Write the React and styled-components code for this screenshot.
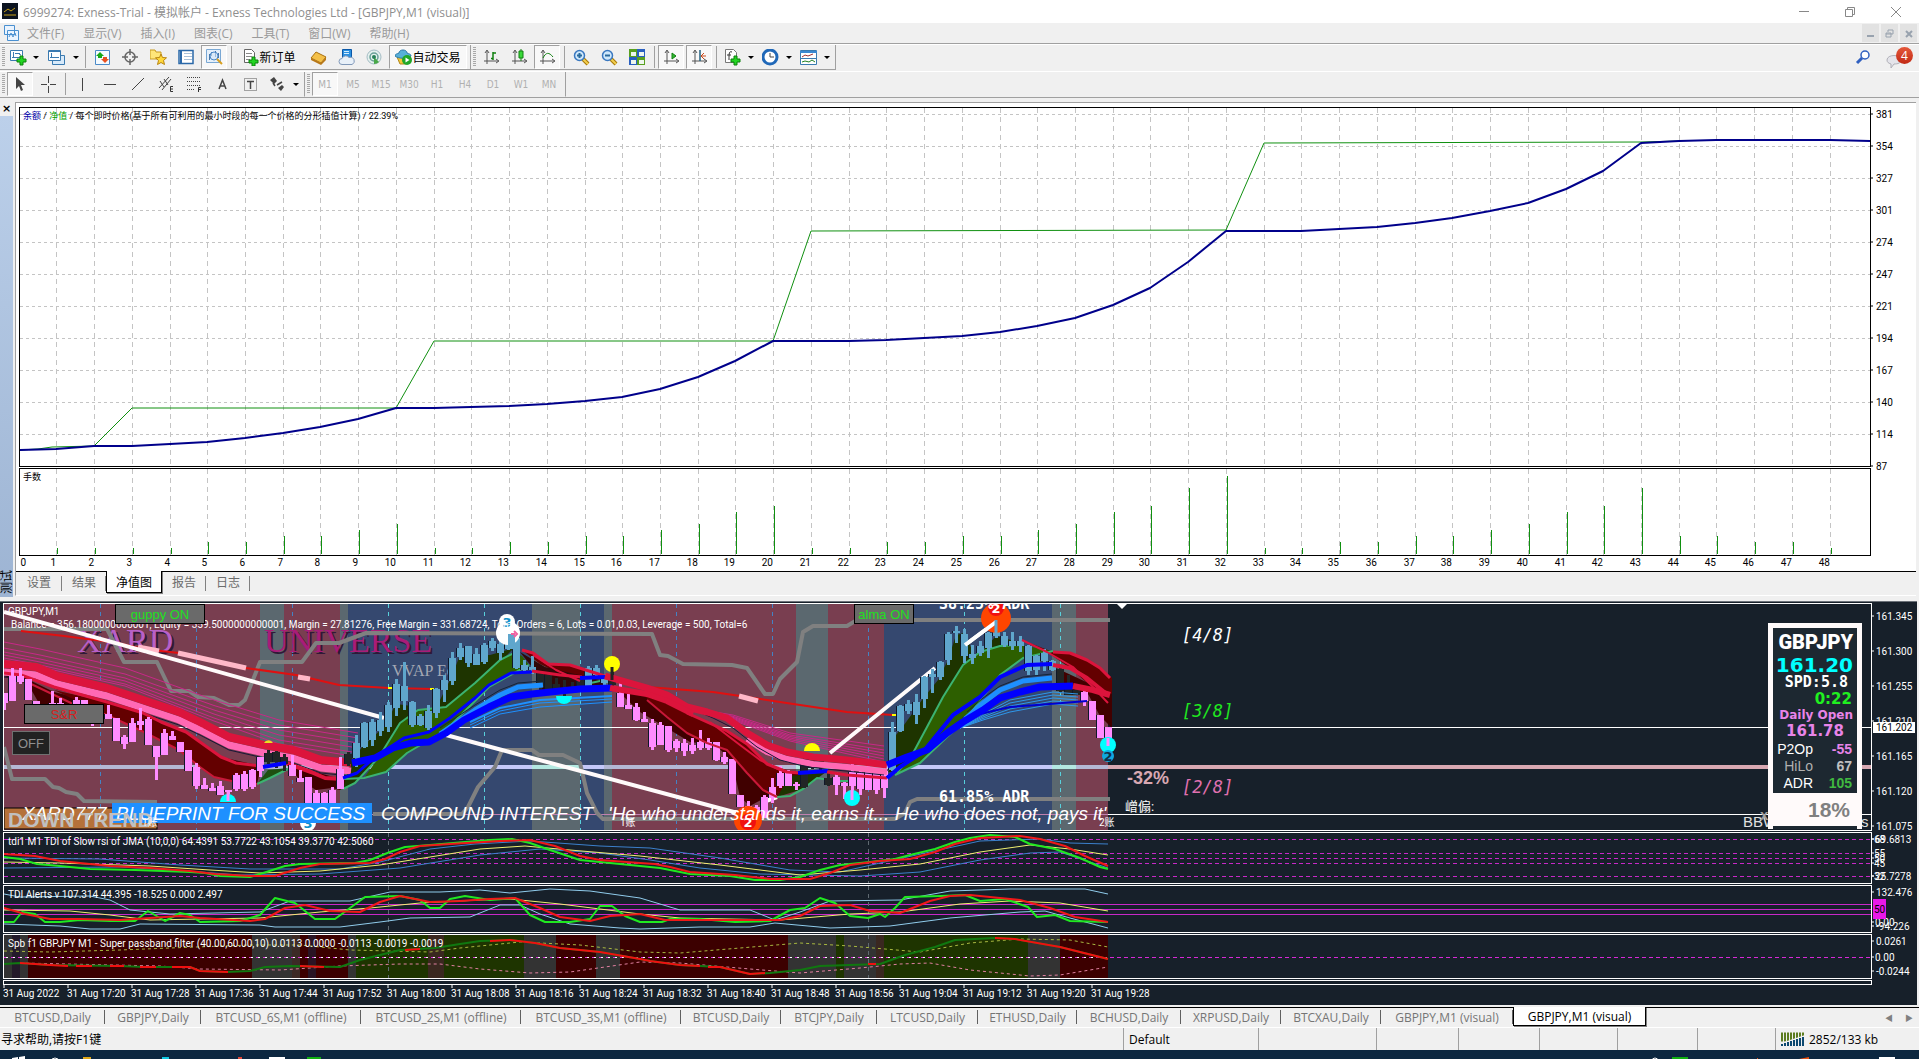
import React from "react";
import styled, { createGlobalStyle, css } from "styled-components";

const UI_FONT = '"Open Sans", "Noto Sans CJK SC", sans-serif';
const CHART_FONT = 'Roboto, "Noto Sans CJK SC", sans-serif';

const GlobalStyle = createGlobalStyle`
  * {
    box-sizing: border-box;
  }

  body {
    margin: 0;
    overflow: hidden;
    background: #f0f0f0;
    font-family: ${UI_FONT};
    font-size: 12px;
    color: #000;
  }

  button {
    margin: 0;
    padding: 0;
    border: 0;
    background: none;
    font: inherit;
    color: inherit;
  }

  svg {
    display: block;
  }
`;

const Window = styled.div`
  display: flex;
  flex-direction: column;
`;

/* ---------- title and menu ---------- */

const TitleBar = styled.header`
  display: flex;
  align-items: center;
  height: 23px;
  padding-left: 2px;
  background: #fff;
  color: #8f8f8f;

  h1 {
    flex: 1;
    margin: 0 0 0 4px;
    font-size: 12px;
    font-weight: 400;
  }
`;

const WindowButton = styled.button`
  display: flex;
  align-items: center;
  justify-content: center;
  width: 46px;
  height: 20px;
`;

const MenuBar = styled.nav`
  display: flex;
  align-items: center;
  height: 21px;
  padding: 0 2px 0 3px;
  border-bottom: 1px solid #a0a0a0;
  color: #9a9a9a;
`;

const MenuItems = styled.div`
  display: flex;
  flex: 1;
  gap: 19px;
  margin-left: 7px;
`;

const MdiButton = styled.button`
  display: flex;
  align-items: center;
  justify-content: center;
  width: 17px;
  height: 18px;
  margin-left: 2px;
  background: #e2e2e2;
`;

/* ---------- toolbars ---------- */

const ToolRow = styled.div`
  display: flex;
  align-items: stretch;
  height: 27px;
  border-top: 1px solid #fff;
  border-bottom: 1px solid ${(p) => (p.$last ? "#a0a0a0" : "transparent")};
`;

const ToolGroup = styled.div`
  display: flex;
  align-items: center;
  padding-right: 1px;
  border-right: 1px solid #a0a0a0;
  border-bottom: 1px solid ${(p) => (p.$underline ? "#a0a0a0" : "transparent")};
`;

const Grip = styled.span`
  width: 3px;
  height: 20px;
  margin: 0 2px;
  background: repeating-linear-gradient(#a8a8a8 0 1px, #f0f0f0 1px 2px);
`;

const ToolButton = styled.button`
  display: flex;
  align-items: center;
  justify-content: center;
  width: ${(p) => p.$width || 26}px;
  height: 24px;
  margin-right: 2px;
  border: 1px solid transparent;
  white-space: nowrap;

  ${(p) =>
    p.$pressed &&
    css`
      background: #f8f8f8;
      border-color: #a0a0a0 #fff #fff #a0a0a0;
    `}
`;

const PeriodButton = styled(ToolButton)`
  color: #b0b0b0;
  font-size: 10px;
  font-family: "DejaVu Sans Condensed", sans-serif;
`;

const Caret = styled.button`
  width: 10px;
  height: 24px;
  margin-right: 2px;

  &::after {
    content: "";
    display: block;
    width: 0;
    margin: 0 auto;
    border: 3px solid transparent;
    border-top-color: #000;
    border-bottom: 0;
  }
`;

const Separator = styled.span`
  width: 1px;
  height: 22px;
  margin: 0 3px 0 2px;
  background: #a0a0a0;
`;

const ToolSpacer = styled.span`
  flex: 1;
`;

const MailButton = styled.button`
  position: relative;
  width: 28px;
  height: 26px;
  margin: 0 5px 0 8px;

  svg {
    margin-top: 6px;
  }
`;

const Badge = styled.span`
  position: absolute;
  top: 2px;
  right: 1px;
  width: 17px;
  height: 17px;
  border-radius: 50%;
  background: linear-gradient(#e4573a, #c22a14);
  color: #fff;
  font-size: 12px;
  line-height: 17px;
  text-align: center;
`;

/* ---------- tester ---------- */

const Tester = styled.section`
  display: flex;
  height: 499px;
  margin-top: 4px;
`;

const TesterSide = styled.aside`
  display: flex;
  flex-direction: column;
  width: 15px;
  padding-right: 2px;

  button {
    height: 14px;
    font: bold 11px/10px "DejaVu Sans", sans-serif;
  }

  div {
    flex: 1;
    display: flex;
    align-items: center;
    justify-content: flex-end;
    padding-bottom: 3px;
    margin-bottom: 4px;
    background: linear-gradient(#bcd0ea, #9db4d3);
    writing-mode: vertical-rl;
    text-orientation: sideways;
    font-size: 12px;
    line-height: 13px;
  }

  span {
    transform: rotate(180deg);
  }
`;

const TesterMain = styled.div`
  flex: 1;
  min-width: 0;
  height: 494px;
  margin-right: 3px;
  border-top: 1px solid #a0a0a0;
  border-left: 1px solid #a0a0a0;
  border-bottom: 1px solid #fff;
`;

const TesterCharts = styled.div`
  padding: 4px 0 0 3px;
  background: #fff;
  border-bottom: 1px solid #000;
`;

const PlotRow = styled.div`
  display: flex;
  height: ${(p) => p.$height}px;
  margin-bottom: ${(p) => p.$gap || 0}px;
`;

const Plot = styled.div`
  position: relative;
  flex: 1;
  min-width: 0;
  overflow: hidden;
  border: 1px solid ${(p) => p.$line};
`;

const AxisColumn = styled.div`
  width: 45px;

  svg {
    overflow: visible;
  }
`;

const Caption = styled.p`
  position: absolute;
  top: 1px;
  left: 3px;
  margin: 0;
  font: 9px/14px ${CHART_FONT};

  b {
    font-weight: 400;
    color: #0000a8;
  }

  i {
    font-style: normal;
    color: #00a000;
  }
`;

const TesterTabs = styled.div`
  display: flex;
  height: 22px;
`;

const TesterTab = styled.button`
  position: relative;
  width: ${(p) => p.$width}px;
  height: 20px;
  color: #6c6c6c;

  &::after {
    content: "";
    position: absolute;
    top: 4px;
    right: 0;
    width: 1px;
    height: 15px;
    background: #808080;
  }

  ${(p) =>
    p.$active &&
    css`
      height: 22px;
      margin-top: -1px;
      background: #fff;
      color: #000;
      border: 1px solid #000;
      border-top: 0;
      box-shadow: 1px 1px 0 #808080;

      &::after {
        display: none;
      }
    `}
`;

/* ---------- price chart ---------- */

const ChartWindow = styled.section`
  padding: 1px 0 0 3px;
  margin-right: 2px;
  border-top: 1px solid #6b7178;
  background: #17202a;
`;

const ChartButton = styled.button`
  position: absolute;
  left: ${(p) => p.$left}px;
  top: ${(p) => p.$top}px;
  width: ${(p) => p.$width}px;
  height: ${(p) => p.$height || 20}px;
  border: 1px solid ${(p) => p.$edge || "#000"};
  background: ${(p) => p.$fill || "#6a6a6a"};
  color: ${(p) => p.$color};
  font: 13px "Liberation Sans", Arial, sans-serif;
`;

const QuoteCard = styled.aside`
  position: absolute;
  top: 19px;
  right: 9px;
  width: 94px;
  border: 5px solid #fffafa;
  border-bottom-width: 0;
  background: #1d2831;
  color: #fff;
  text-align: right;
  font-family: "Liberation Sans", Arial, sans-serif;
`;

const QuoteLine = styled.div`
  height: ${(p) => p.$height || 17}px;
  line-height: ${(p) => p.$height || 17}px;
  padding-right: ${(p) => p.$pad || 4}px;
  font-family: ${(p) => p.$font || '"DejaVu Sans", sans-serif'};
  font-size: ${(p) => p.$size || 15}px;
  font-weight: ${(p) => p.$weight || 700};
  color: ${(p) => p.$color || "#fff"};
  white-space: nowrap;
`;

const QuotePair = styled.div`
  display: grid;
  grid-template-columns: 40px 1fr;
  height: 17px;
  padding-right: 5px;
  font-size: 14px;
  line-height: 17px;
  color: ${(p) => p.$label || "#fff"};

  b {
    color: ${(p) => p.$color};
  }
`;

const QuoteShare = styled.div`
  height: 33px;
  margin: 1px 0 3px;
  padding-right: 7px;
  background: #fffafa;
  color: #808080;
  font-size: 21px;
  font-weight: 700;
  line-height: 33px;
`;

/* ---------- footer ---------- */

const ChartTabs = styled.nav`
  display: flex;
  height: 21px;
  margin-top: 2px;
  border-top: 1px solid #000;
  border-bottom: 1px solid #fff;
`;

const ChartTab = styled.button`
  position: relative;
  width: ${(p) => p.$width}px;
  height: 19px;
  color: #757575;
  white-space: nowrap;

  &::after {
    content: "";
    position: absolute;
    top: 2px;
    right: 0;
    width: 1px;
    height: 14px;
    background: #606060;
  }

  ${(p) =>
    p.$active &&
    css`
      margin-top: -1px;
      background: #fff;
      color: #000;
      border: 1px solid #000;
      border-top: 0;
      box-shadow: 1px 1px 0 #808080;

      &::after {
        display: none;
      }
    `}
`;

const TabScroll = styled.div`
  display: flex;
  gap: 12px;
  margin-left: auto;
  padding-right: 6px;
  align-items: center;
  color: #808080;
  font-size: 8px;
`;

const StatusBar = styled.footer`
  display: flex;
  height: 22px;
`;

const StatusCell = styled.div`
  display: flex;
  align-items: center;
  gap: 4px;
  flex: ${(p) => (p.$width ? "none" : 1)};
  width: ${(p) => (p.$width ? p.$width + "px" : "auto")};
  padding-left: ${(p) => (p.$width ? 5 : 1)}px;
  border-left: ${(p) => (p.$width ? "1px solid #a0a0a0" : 0)};
`;

const Taskbar = styled.div`
  height: 9px;
  overflow: hidden;
  background: #0c2740;
`;

/* ---------- icons ---------- */

const Plus = ({ x = 7, y = 7 }) => (
  <path
    d={`M${x + 3} ${y}h3v3h3v3h-3v3h-3v-3h-3v-3h3z`}
    fill="#22d422"
    stroke="#0a800a"
  />
);

const Axes = ({ children }) => (
  <>
    <path d="M4 2v13M1 12h14M2 4l2-3 2 3M13 10l3 2-3 2" stroke="#555" fill="none" />
    {children}
  </>
);

const Lens = ({ sign }) => (
  <>
    <path d="M10 10l5 5" stroke="#a87808" strokeWidth="4" />
    <path d="M10 10l5 5" stroke="#f2cf50" strokeWidth="2" />
    <circle cx="6.500" cy="6.500" r="5" fill="#cfe8fb" stroke="#3a78c0" strokeWidth="1.500" />
    <path d={sign} stroke="#2a6a9c" strokeWidth="2" />
  </>
);

const ICONS = {
  newChart: (
    <>
      <path d="M.5 1.500h12v10H.5z" fill="#fff" stroke="#3a7ab0" />
      <path d="M3.500 3v6M2 8.500h9M9 5l2 1M5 4.500h5" stroke="#3a7ab0" />
      <Plus />
    </>
  ),
  profiles: (
    <>
      <path d="M4.500 6.500h12v9h-12z" fill="#d8eafa" stroke="#3a7ab0" />
      <path d="M.5 1.500h12v10H.5z" fill="#fff" stroke="#3a7ab0" />
      <path d="M.5 2.500h12M3.500 4v5M2 8.500h9" stroke="#3a7ab0" />
    </>
  ),
  marketWatch: (
    <>
      <path d="M1.500 1.500h14v14h-14z" fill="#f4faff" stroke="#4a8ac8" />
      <path d="M6 3l4 4H8v2H4V7H2z" fill="#18a818" />
      <path d="M11 14l4-4h-2V8H9v2H7z" fill="#e85020" />
    </>
  ),
  cross: (
    <>
      <circle cx="8" cy="8" r="5" fill="none" stroke="#666" strokeWidth="1.500" />
      <path d="M8 0v6M8 10v6M0 8h6M10 8h6" stroke="#666" strokeWidth="1.500" />
    </>
  ),
  folderStar: (
    <>
      <path d="M0 1h5l1 2h5v7H0z" fill="#ffe67a" stroke="#c89a20" />
      <path
        d="M11 5l1.500 3.500 4 .3-3 2.700 1 4-3.500-2-3.500 2 1-4-3-2.700 4-.3z"
        fill="#ffd83a"
        stroke="#b88410"
      />
    </>
  ),
  terminal: (
    <>
      <path d="M1 1.500h14v13H1z" fill="#fff" stroke="#2a68a8" strokeWidth="1.500" />
      <path d="M2 2h2v12H2z" fill="#2a68a8" />
      <path d="M6 4.500h8M6 7.500h8M6 10.500h8" stroke="#a8c0d8" />
    </>
  ),
  tester: (
    <>
      <path d="M.5.5h14v13H.5z" fill="#e6f0fa" stroke="#7aa8d4" />
      <path d="M3.500 11V5M5.500 7V3M9.500 8V2M12.500 9V4" stroke="#4a78a8" />
      <circle cx="8" cy="7" r="4" fill="#d4e6f8" stroke="#4a88c8" fillOpacity=".6" />
      <path d="M11 10l5 5" stroke="#d8a020" strokeWidth="2" />
    </>
  ),
  order: (
    <>
      <path d="M2.500.5h7l3 3v10h-10z" fill="#fff" stroke="#666" />
      <path d="M4 4.500h6M4 7.500h6M4 10.500h4" stroke="#888" />
      <Plus y={8} />
    </>
  ),
  gold: (
    <>
      <path d="M1 9l5-6 10 5-5 6z" fill="#f4c048" stroke="#a87010" />
      <path d="M1 9l10 5 5-6v3l-5 5L1 11z" fill="#b87818" />
    </>
  ),
  cloud: (
    <>
      <path d="M4.500.5h9v9h-9z" fill="#2a90e0" stroke="#0a58a8" />
      <path d="M6 2.500h5M6 4.500h5" stroke="#d0ecff" />
      <path
        d="M4 15.500a3 3 0 010-6 4 4 0 017-1 3.500 3.500 0 013 7z"
        fill="#e8f0f8"
        stroke="#8098b8"
      />
    </>
  ),
  signal: (
    <>
      <circle cx="8" cy="8" r="7" fill="#e4f0ee" stroke="#a4bcc4" />
      <circle cx="8" cy="8" r="4" fill="none" stroke="#6aa098" strokeWidth="1.500" />
      <path d="M8 8v7a7 7 0 005-2z" fill="#48a848" />
      <circle cx="8" cy="8" r="2" fill="#288058" />
    </>
  ),
  auto: (
    <>
      <path d="M2 8l6-4 6 4-3 7H5z" fill="#f4c838" stroke="#b08820" />
      <path d="M0 7c0-2 2-2 4-3 0-4 8-4 8 0 2 1 4 1 4 3-4 3-12 3-16 0z" fill="#58b0d8" stroke="#2a78a8" />
      <circle cx="12" cy="11" r="5" fill="#22a828" />
      <path d="M10.500 8.500v5l4-2.500z" fill="#fff" />
    </>
  ),
  bars: (
    <Axes>
      <path d="M10 3v8M8 9.500h2M10 4h3" stroke="#108010" strokeWidth="1.500" />
    </Axes>
  ),
  candles: (
    <Axes>
      <path d="M10 0v12" stroke="#108010" />
      <path d="M8 2h4v7H8z" fill="#38d838" stroke="#108010" />
    </Axes>
  ),
  line: (
    <Axes>
      <path d="M4 9c3-6 6-6 10-1" stroke="#108010" fill="none" />
    </Axes>
  ),
  zoomIn: <Lens sign="M4 6.500h5M6.500 4v5" />,
  zoomOut: <Lens sign="M4 6.500h5" />,
  tile: (
    <>
      <path d="M0 0h8v8H0zM8 8h8v8H8z" fill="#58a020" />
      <path d="M8 0h8v8H8zM0 8h8v8H0z" fill="#2a60c0" />
      <path d="M2 3h5v4H2zM10 3h5v4h-5zM2 11h5v4H2zM10 11h5v4h-5z" fill="#eef6ee" />
    </>
  ),
  autoScroll: (
    <Axes>
      <path d="M9 4l4 3-4 3z" fill="#30b830" stroke="#108010" />
    </Axes>
  ),
  shift: (
    <Axes>
      <path d="M9 1v11" stroke="#206080" strokeWidth="1.500" />
      <path d="M15 7h-4M13 4l-3 3 3 3" stroke="#c84818" fill="none" />
    </Axes>
  ),
  indicator: (
    <>
      <path d="M1.500.5h8l3 3v10h-11z" fill="#fff" stroke="#777" />
      <path d="M8 3c-3-1-3 1-3 8M3 6h4" stroke="#333" fill="none" />
      <Plus />
    </>
  ),
  clock: (
    <>
      <circle cx="8" cy="8" r="7" fill="#fff" stroke="#2068b8" strokeWidth="3" />
      <path d="M8 4v4h4" stroke="#444" fill="none" />
    </>
  ),
  template: (
    <>
      <path d="M.5 1.500h16v14H.5z" fill="#fff" stroke="#3a7ab0" />
      <path d="M0 3h17" stroke="#3a88d0" strokeWidth="2" />
      <path d="M2 8l3-2 3 1 5-2" stroke="#a03030" fill="none" />
      <path d="M2 13l3-1 4 1 3-2 3 2" stroke="#208020" fill="none" />
      <path d="M0 9.500h16" stroke="#3a7ab0" />
    </>
  ),
  arrow: <path d="M4 1v12l3-3 2 5 2-1-2-5h4z" fill="#444" />,
  crosshair: <path d="M8.500 0v7M8.500 10v7M1 8.500h6M10 8.500h6" stroke="#444" />,
  vline: <path d="M8.500 2v13" stroke="#444" />,
  hline: <path d="M2 8.500h12" stroke="#444" />,
  trend: <path d="M2 14L14 2" stroke="#444" />,
  channel: (
    <>
      <path d="M1 12L11 1M4 14L13 3M2 5l4 6M6 3l4 6" stroke="#444" />
      <path d="M15 10.500h-2.500v5H15M12.500 13H15" stroke="#333" fill="none" />
    </>
  ),
  fibo: (
    <>
      <path d="M1 1.500h14M1 5.500h14M1 9.500h14M1 13.500h8" stroke="#444" strokeDasharray="1 1" />
      <path d="M15 11.500h-2.500V16M12.500 13.500H15" stroke="#333" fill="none" />
    </>
  ),
  text: <path d="M5 13l3.500-9L12 13M6 10h5" stroke="#444" strokeWidth="1.500" fill="none" />,
  label: (
    <>
      <path d="M2.500 2.500h12v12h-12z" fill="none" stroke="#555" strokeDasharray="1 1" />
      <path d="M5 5.500h7M8.500 5v8" stroke="#444" strokeWidth="1.500" />
    </>
  ),
  arrows: (
    <>
      <path d="M1 4l4-3 3 4-3 3zM9 12l4-3 2 2-3 4z" fill="#444" />
      <path d="M4 7l2 3M8 9l5-3" stroke="#444" strokeWidth="1.500" />
    </>
  ),
  search: (
    <>
      <circle cx="10" cy="6" r="4" fill="#fff" stroke="#3060c0" strokeWidth="1.500" />
      <path d="M7 9l-5 5" stroke="#3060c0" strokeWidth="3" />
    </>
  ),
  bubble: (
    <path
      d="M1 7c0-6 14-6 14 0 0 3-3 4-7 4l-3 4v-4c-3-1-4-2-4-4z"
      fill="#e4e4ea"
      stroke="#b0b0b8"
    />
  ),
  app: (
    <>
      <path d="M0 0h16v16H0z" fill="#0c1420" />
      <path d="M2 12h12M2 9l4-3 3 2 4-3" stroke="#c8a018" fill="none" />
    </>
  ),
  chartDoc: (
    <>
      <path d="M1.500.5h10v9h-10zM4.500 5.500h11v10h-11z" fill="#eaf4ff" stroke="#4a90d0" />
      <path d="M6 12l2-4 2 4 2-4 1 3" stroke="#4a90d0" fill="none" />
    </>
  ),
};

function Icon({ name }) {
  return (
    <svg width="17" height="17" viewBox="0 0 17 17" aria-hidden="true">
      {ICONS[name]}
    </svg>
  );
}

function Tool({ name, pressed }) {
  return (
    <ToolButton $pressed={pressed} aria-label={name}>
      <Icon name={name} />
    </ToolButton>
  );
}

/* ---------- tester data ---------- */

const STEP = 37.73;
const gridX = (n) => Math.round(18.6 + STEP * n);

const BALANCE = [
  450, 449, 446, 446, 444, 442, 438, 433, 427, 419, 408, 408, 407, 406, 404,
  401, 397, 389, 377, 361, 341, 341, 341, 340, 338, 336, 332, 326, 318, 305,
  288, 262, 231, 231, 231, 229, 227, 223, 218, 211, 203, 189, 171, 143, 141,
  140, 140, 140, 140,
];

const EQUITY =
  "19,450 38,449 52,447 94,446 132,408 396,408 434,341 773,341 811,231 1226,230 1264,143 1641,142 1680,141";

const LOTS = [
  0, 1, 1, 1, 1, 2, 2, 3, 3, 4, 5, 1, 1, 2, 2, 3, 3, 4, 5, 7, 8, 1, 1, 2, 2, 3,
  3, 4, 5, 7, 8, 11, 13, 1, 1, 2, 2, 3, 3, 4, 5, 7, 8, 11, 3, 3, 2, 2, 1,
];

const EQUITY_LABELS = [381, 354, 327, 301, 274, 247, 221, 194, 167, 140, 114, 87];

const balancePoints =
  BALANCE.map((y, n) => `${gridX(n)},${y}`).join(" ") + " 1871,141";

/* drawing surface whose top left corner lies at (x, y) of the window */
function Canvas({ x, y, children }) {
  return (
    <svg width="100%" height="100%">
      <g transform={`translate(${-x} ${-y})`}>{children}</g>
    </svg>
  );
}

const Poly = ({ p, c, w = 1, dash }) => (
  <polyline
    points={p}
    fill="none"
    stroke={c}
    strokeWidth={w}
    strokeDasharray={dash}
    strokeLinejoin="round"
  />
);

function GridLines({ top, bottom }) {
  return LOTS.map(
    (_, n) =>
      n > 0 && (
        <path
          key={n}
          d={`M${gridX(n)} ${top}V${bottom}`}
          stroke="#c4c4c4"
          strokeDasharray="5 4"
          shapeRendering="crispEdges"
        />
      )
  );
}

function TesterPanel() {
  return (
    <Tester>
      <TesterSide>
        <button aria-label="close">×</button>
        <div>
          <span>测试</span>
        </div>
      </TesterSide>
      <TesterMain>
        <TesterCharts>
          <PlotRow $height={360} $gap={1}>
            <Plot $line="#000">
              <Canvas x={20} y={108}>
                <GridLines top={108} bottom={466} />
                {EQUITY_LABELS.slice(0, 11).map((v, i) => (
                  <path
                    key={v}
                    d={`M20 ${114 + i * 32}H4000`}
                    stroke="#c4c4c4"
                    strokeDasharray="3 3"
                    shapeRendering="crispEdges"
                  />
                ))}
                <Poly p={EQUITY} c="#109010" />
                <Poly p={balancePoints} c="#00008b" w={2} />
              </Canvas>
              <Caption>
                <b>余额</b> / <i>净值</i> /
                每个即时价格(基于所有可利用的最小时段的每一个价格的分形插值计算) /
                22.39%
              </Caption>
            </Plot>
            <AxisColumn>
              <Canvas x={1871} y={107}>
                <g fontSize="10" fontFamily={CHART_FONT}>
                  {EQUITY_LABELS.map((v, i) => (
                    <React.Fragment key={v}>
                      <path d={`M1871 ${114 + i * 32}h2`} stroke="#000" />
                      <text x="1876" y={118 + i * 32}>{v}</text>
                    </React.Fragment>
                  ))}
                </g>
              </Canvas>
            </AxisColumn>
          </PlotRow>
          <PlotRow $height={88}>
            <Plot $line="#000">
              <Canvas x={20} y={469}>
                <GridLines top={469} bottom={555} />
                {LOTS.map((v, n) => (
                  <rect
                    key={n}
                    x={gridX(n) + 1}
                    y={554 - v * 6}
                    width="1"
                    height={v * 6}
                    fill="#109010"
                  />
                ))}
              </Canvas>
              <Caption>手数</Caption>
            </Plot>
            <AxisColumn />
          </PlotRow>
          <PlotRow $height={15}>
            <Canvas x={19} y={556}>
              <g fontSize="10" fontFamily={CHART_FONT} textAnchor="end">
                {LOTS.map((_, n) => (
                  <text key={n} x={n ? gridX(n) : 26} y="566">{n}</text>
                ))}
              </g>
            </Canvas>
          </PlotRow>
        </TesterCharts>
        <TesterTabs>
          <TesterTab $width={46}>设置</TesterTab>
          <TesterTab $width={44}>结果</TesterTab>
          <TesterTab $width={56} $active>净值图</TesterTab>
          <TesterTab $width={44}>报告</TesterTab>
          <TesterTab $width={44}>日志</TesterTab>
        </TesterTabs>
      </TesterMain>
    </Tester>
  );
}

/* ---------- price chart data ---------- */

const MAROON = "#793e50";
const SLATE = "#5b686f";
const NAVY = "#35486f";
const CRIMSON = "#dc143c";
const GREEN_LINE = "#3cb371";

// start of each session band, the next one ends it
const BANDS = [
  [4, MAROON], [260, SLATE], [284, MAROON], [340, SLATE], [348, NAVY],
  [532, SLATE], [580, NAVY], [604, SLATE], [612, MAROON], [796, SLATE],
  [828, MAROON], [884, NAVY], [1052, SLATE], [1076, MAROON], [1108, null],
];

const FILTER_BANDS = [
  [4, "#333"], [12, "#241a2a"], [20, "#333"], [28, "#3c0000"], [252, "#333"],
  [292, "#3c2a26"], [300, "#3c0000"], [308, "#2a1424"], [316, "#3c0000"],
  [348, "#333"], [356, "#1e3400"], [428, "#3a2820"], [444, "#1e3400"],
  [524, "#333"], [556, "#3c0000"], [596, "#333"], [620, "#3c0000"],
  [788, "#333"], [836, "#1e3400"], [844, "#333"], [876, "#3a2820"],
  [884, "#1e3400"], [1028, "#333"], [1060, "#3c0000"], [1108, null],
];

// x, high, body top, body bottom, low
const DOWN_BARS = [
  [4, 693, 693, 703, 710], [12, 668, 676, 701, 701], [20, 668, 676, 682, 684],
  [28, 679, 679, 700, 700], [36, 701, 701, 706, 706], [52, 691, 703, 706, 706],
  [60, 698, 703, 706, 706], [76, 697, 700, 706, 706], [84, 700, 700, 706, 706],
  [92, 720, 722, 724, 726], [108, 705, 714, 719, 719], [116, 718, 718, 741, 741],
  [124, 735, 737, 744, 749], [132, 718, 723, 742, 742], [140, 708, 721, 725, 730],
  [148, 717, 719, 745, 745], [156, 746, 746, 757, 780], [164, 729, 733, 755, 755],
  [172, 731, 736, 740, 740], [180, 742, 742, 752, 752], [188, 750, 750, 771, 771],
  [196, 763, 767, 786, 789], [204, 778, 785, 789, 789], [212, 783, 788, 791, 791],
  [220, 781, 786, 795, 795], [228, 790, 790, 792, 802], [236, 773, 775, 789, 791],
  [244, 771, 774, 789, 791], [252, 769, 770, 787, 789], [260, 757, 757, 771, 777],
  [292, 755, 765, 776, 776], [300, 770, 778, 782, 782], [308, 777, 777, 804, 804],
  [316, 790, 793, 804, 804], [324, 792, 793, 804, 804], [332, 787, 790, 804, 804],
  [340, 757, 769, 789, 789], [620, 682, 693, 707, 707], [628, 694, 705, 709, 709],
  [636, 703, 707, 720, 721], [644, 712, 719, 722, 722], [652, 719, 723, 747, 750],
  [660, 722, 725, 745, 745], [668, 726, 726, 750, 752], [676, 739, 741, 748, 752],
  [684, 739, 743, 751, 756], [692, 738, 745, 751, 754], [700, 730, 742, 748, 750],
  [708, 738, 742, 748, 750], [716, 742, 742, 760, 761], [724, 752, 757, 762, 764],
  [732, 759, 759, 794, 794], [740, 795, 795, 807, 807], [748, 801, 806, 813, 813],
  [756, 805, 807, 814, 814], [764, 795, 797, 818, 818], [772, 778, 787, 798, 803],
  [780, 766, 773, 786, 788], [788, 770, 773, 786, 786], [796, 782, 784, 786, 790],
  [836, 772, 777, 785, 795], [844, 782, 783, 786, 799], [852, 764, 772, 786, 799],
  [860, 766, 773, 789, 795], [868, 766, 768, 790, 790], [876, 769, 770, 790, 794],
  [884, 769, 771, 788, 798], [1084, 690, 692, 701, 706], [1092, 701, 701, 720, 720],
  [1100, 715, 715, 738, 738], [1108, 727, 727, 738, 746],
];

const UP_BARS = [
  [356, 735, 743, 758, 767], [364, 722, 723, 747, 748], [372, 719, 722, 740, 746],
  [380, 712, 720, 731, 736], [388, 702, 705, 727, 732], [396, 679, 684, 708, 716],
  [404, 662, 686, 701, 710], [412, 701, 702, 725, 727], [420, 714, 716, 725, 726],
  [428, 705, 711, 728, 730], [436, 688, 689, 713, 718], [444, 675, 680, 690, 702],
  [452, 652, 658, 681, 685], [460, 643, 648, 657, 660], [468, 646, 646, 663, 667],
  [476, 648, 654, 665, 665], [484, 643, 645, 662, 664], [492, 638, 641, 648, 651],
  [500, 641, 644, 653, 660], [508, 630, 633, 649, 650], [516, 630, 638, 668, 669],
  [524, 660, 665, 670, 671], [532, 656, 667, 670, 674], [588, 666, 668, 686, 686],
  [596, 665, 668, 675, 677], [604, 674, 677, 683, 685], [892, 722, 732, 770, 771],
  [900, 705, 706, 731, 732], [908, 700, 704, 711, 714], [916, 694, 702, 715, 724],
  [924, 676, 677, 699, 708], [932, 669, 674, 677, 693], [940, 661, 662, 677, 680],
  [948, 632, 634, 660, 665], [956, 626, 631, 633, 643], [964, 629, 634, 656, 663],
  [972, 645, 654, 658, 664], [980, 641, 646, 653, 656], [988, 632, 633, 648, 658],
  [996, 620, 631, 636, 638], [1004, 632, 636, 645, 647], [1012, 632, 641, 646, 650],
  [1020, 636, 641, 646, 652], [1028, 645, 646, 671, 675], [1036, 655, 656, 670, 675],
  [1044, 649, 653, 661, 671], [1052, 660, 661, 670, 671],
];

const FLAT_BARS = [
  [268, 750, 753, 762, 764], [276, 751, 752, 762, 768], [284, 754, 757, 764, 771],
  [348, 752, 754, 764, 766], [540, 672, 673, 687, 690], [548, 674, 675, 689, 689],
  [556, 678, 684, 689, 690], [564, 680, 690, 693, 697], [572, 682, 687, 689, 690],
  [580, 679, 680, 688, 690], [612, 667, 680, 685, 688], [804, 758, 759, 787, 788],
  [812, 757, 758, 768, 769], [820, 758, 759, 768, 770], [828, 772, 778, 785, 786],
  [1060, 668, 669, 691, 693], [1068, 675, 683, 695, 695], [1076, 686, 690, 695, 695],
];

function Bars({ data, color }) {
  return (
    <g fill={color} shapeRendering="crispEdges">
      {data.map(([x, high, top, bottom, low]) => (
        <React.Fragment key={x}>
          <rect x={x - 4} y={top} width="1" height={bottom - top} fill="#101828" />
          <rect x={x - 1} y={high} width="3" height={low - high} />
          <rect x={x - 3} y={top} width="7" height={bottom - top} />
        </React.Fragment>
      ))}
    </g>
  );
}

function Bands({ data, top, height }) {
  return data.slice(0, -1).map(([x, fill], i) => (
    <rect key={x} x={x} y={top} width={data[i + 1][0] - x} height={height} fill={fill} />
  ));
}

const FAN_LEFT = [[0, 0], [6, 5], [10, 10], [13, 15], [16, 20], [18, 24]];
const FAN_MID = [0, 4, 7, 10, 13, 16];
const FAN_RIGHT = [0, 3, 6, 9, 12];
const DAY_LINES = [100, 196, 292, 388, 484, 580, 676, 772, 868, 964, 1060];

const GUPPY_TOP = "4,664 36,667 57,676 107,688 143,700 179,712 200,722 229,737 264,745 293,750 321,760 351,763";

function Ball({ x, y, r = 8, fill, label, color = "#1090c8" }) {
  return (
    <>
      <circle cx={x} cy={y} r={r} fill={fill} />
      {label && (
        <text x={x} y={y + 5} fontSize="13" fontWeight="700" textAnchor="middle" fill={color}>
          {label}
        </text>
      )}
    </>
  );
}

function PriceDrawing() {
  return (
    <Canvas x={4} y={604}>
      <Bands data={BANDS} top={604} height={226} />
      {DAY_LINES.map((x) => (
        <path
          key={x}
          d={`M${x} 604V830`}
          stroke={[388, 484, 580, 964, 1060].includes(x) ? "#58d0dc" : "#4482c4"}
          strokeDasharray="4 4"
          shapeRendering="crispEdges"
        />
      ))}
      <path d="M4 767H1108" stroke="#b4b8d4" strokeWidth="4" />
      <path d="M348 767H532M580 767H604M884 767H1052" stroke="#c4c8f8" strokeWidth="4" />
      <path d="M532 767H580M796 767H828M1052 767H1076" stroke="#b4e8e0" strokeWidth="4" />
      <path d="M1108 767H4000" stroke="#d8a8b2" strokeWidth="4" />
      <path d="M4 727H4000" stroke="#fff" shapeRendering="crispEdges" />
      <path d="M4 814H1108" stroke="#c080b0" shapeRendering="crispEdges" />
      <path d="M1108 814H4000" stroke="#fff" shapeRendering="crispEdges" />

      <g fontFamily="Liberation Serif, serif" fontSize="34">
        <text x="79" y="654" fill="#301838">XARD</text>
        <text x="77" y="652" fill="#b860c8">XARD</text>
        <text x="266" y="654" fill="#301838">UNIVERSE</text>
        <text x="264" y="652" fill="#a81c78">UNIVERSE</text>
        <text x="392" y="676" fontSize="16" fill="#a4a8b4">VVAP Ed</text>
      </g>

      <Poly
        w={4}
        c="#808080"
        p="4,629 107,629 124,662 157,662 171,691 189,691 198,697 214,698 229,705 239,705 245,700 260,662 302,662 316,643 339,643 366,633 652,634 660,655 668,656 683,664 732,665 747,668 765,694 773,694 780,679 797,662 803,632 813,626 847,626 857,620 1110,620"
      />
      <Poly w={4} c="#808080" p="4,747 12,779 45,779 53,787 59,788 66,792 77,794 84,801 157,802" />
      <Poly
        w={4}
        c="#808080"
        p="373,814 462,814 468,807 478,787 495,767 502,750 532,750 539,755 563,755 580,763 587,793 597,813 603,819 895,819 905,813 910,802 917,799 1110,799"
      />

      {FAN_LEFT.map(([a, b]) => (
        <Poly
          key={a}
          c="#c82888"
          p={`4,${642 + a} 40,${649 + a} 125,${668 + a} 214,${700 + (a + b) / 2} 279,${720 + b} 358,${733 + b}`}
        />
      ))}
      {FAN_MID.map((d) => (
        <Poly key={d} c="#c82888" p={`690,708 733,${715 + d / 3} 790,${733 + d / 2} 884,${746 + d}`} />
      ))}

      <Poly w={2} c="#e01010" p="21,631 64,636 118,643 143,649 179,653 246,668 296,675 339,685 389,688 434,689" />
      <Poly w={2} c="#e01010" p="647,687 713,692 780,702 847,712 893,715" />
      <path
        d="M138 647L159 651M178 653L246 668M298 677L310 679M739 696L758 701"
        stroke="#ffb8c8"
        strokeWidth="5"
      />
      <path d="M388 688h4M430 689h4M892 715h4" stroke="#ff0" strokeWidth="2" />

      {/* falling clouds */}
      <polygon
        fill="#420000"
        points="4,676 21,676 54,692 107,705 161,724 221,757 261,766 257,784 244,784 214,777 196,765 180,750 164,732 148,720 108,715 84,703 60,705 40,705 28,684"
      />
      <polygon
        fill="#640000"
        points="54,690 107,702 143,713 161,722 186,732 200,742 221,757 236,763 258,766 240,783 214,777 200,767 179,750 146,733 107,715"
      />
      <polygon fill="#420000" points="286,764 341,779 352,782 340,790 332,788 316,790 300,780" />
      <polygon fill="#640000" points="522,650 533,653 548,664 570,665 607,677 580,677 560,674 540,664" />
      <polygon fill="#300808" points="520,652 545,667 600,680 606,688 540,690 536,672" />
      <polygon
        fill="#400000"
        points="612,688 647,694 690,714 727,731 747,744 767,764 800,774 815,776 777,797 766,797 750,806 740,797 732,762 716,745 690,742 660,724 640,712 624,697"
      />
      <polygon
        fill="#640000"
        points="640,692 687,713 727,731 747,744 767,764 787,772 800,773 777,797 763,790 747,773 727,750 707,743 687,733 667,717"
      />
      <polygon fill="#1e3400" points="777,797 790,776 826,772 803,789" />
      <polygon fill="#640000" points="1022,640 1053,652 1070,653 1087,660 1100,668 1112,678 1112,697 1093,688 1070,668 1047,652" />
      <polygon fill="#420000" points="1056,668 1112,694 1112,728 1100,716 1088,694 1060,690" />

      {/* rising clouds */}
      <polygon
        fill="#1e3400"
        points="350,762 364,745 384,727 396,704 412,706 428,720 440,700 452,676 460,655 490,655 514,648 500,662 475,683 446,707 418,712 400,723 379,757 352,785 343,789"
      />
      <polygon
        fill="#2d5f00"
        points="364,778 379,757 400,723 418,710 446,707 475,683 500,660 514,653 522,656 529,665 507,677 489,687 446,730 429,740 407,753 386,772"
      />
      <polygon
        fill="#1e3400"
        points="888,772 892,766 896,735 904,725 922,700 938,680 948,660 956,635 964,633 976,658 996,636 1022,643 1000,646 980,652 963,665 943,697 927,727 912,755 897,773"
      />
      <polygon
        fill="#2d5f00"
        points="895,775 912,755 927,727 943,697 963,665 980,652 1000,646 1020,645 1053,651 1023,658 1000,675 983,697 963,723 947,737 920,763"
      />
      <polygon fill="#1e5010" points="257,784 268,770 288,768 270,778" />

      <path
        d="M4 612L384 718M446 735L745 815M830 753L935 668M965 645L996 622M766 801L777 797"
        stroke="#fffafa"
        strokeWidth="4"
      />

      <Poly w={2} c={GREEN_LINE} p="257,784 270,778 288,769" />
      <Poly w={2} c={GREEN_LINE} p="343,789 355,783 379,757 400,723 418,710 446,707 475,683 500,660 514,653" />
      <Poly w={2} c={GREEN_LINE} p="343,779 364,778 386,772 407,753 429,740 446,730 489,687 507,677 529,665" />
      <Poly w={2} c={GREEN_LINE} p="777,797 790,796 803,789 817,778 836,781 850,781" />
      <Poly w={2} c={GREEN_LINE} p="897,773 912,755 927,727 943,697 963,665 980,652 1000,646 1020,645" />
      <Poly w={2} c={GREEN_LINE} p="895,775 920,763 947,737 963,723 983,697 1000,675 1023,658 1053,651" />
      <Poly w={2} c={GREEN_LINE} p="586,684 600,681 610,680" />

      {/* averages, first fall */}
      <g transform="translate(0 8)">
        <Poly w={7} c="#ff69b4" p={GUPPY_TOP} />
      </g>
      <g transform="translate(0 13)">
        <Poly w={1} c="#181838" p={GUPPY_TOP} />
      </g>
      <Poly w={8} c={CRIMSON} p={GUPPY_TOP} />
      <Poly
        w={3}
        c={CRIMSON}
        p="4,673 21,675 54,687 107,702 143,713 161,722 186,732 200,742 221,757 236,763 261,766"
      />
      <Poly
        w={2}
        c="#c81838"
        p="29,683 71,703 107,715 146,733 179,750 200,767 214,777 236,782 257,784"
      />
      <Poly w={4} c={CRIMSON} p="286,763 311,772 325,778 343,779" />

      <Bars data={FLAT_BARS} color="#222626" />
      <Bars data={DOWN_BARS} color="#ff8cff" />
      <Bars data={UP_BARS} color="#5fa6cc" />

      <Poly w={4} c="#00f" p="263,767 286,763" />
      <Poly w={2} c="#1e90ff" p="470,722 500,708 540,700 612,696" />
      <Poly c="#1e90ff" p="470,725 500,711 540,703 612,699" />
      <Poly c="#1e90ff" p="470,728 500,714 540,707 612,702" />
      <Poly c="#142438" p="440,728 475,705 500,690 518,683 543,681" />
      <Poly w={5} c="#1e90ff" p="440,734 475,710 500,695 518,687 543,685" />
      <Poly w={3} c="#00f" p="343,778 357,773 375,757 404,738 429,732 450,718 475,698 489,685 511,673 532,672" />
      <Poly
        w={7}
        c="#00f"
        p="352,763 375,758 393,748 411,743 429,742 446,733 464,720 489,707 511,697 532,694 560,691 580,689 612,688"
      />
      <Poly w={3} c={CRIMSON} p="522,650 533,653 548,664 570,665 608,677" />
      <Poly w={2} c={CRIMSON} p="533,655 556,670 580,681" />
      <Poly w={3} c={CRIMSON} p="532,671 560,675 582,677" />
      <Poly w={4} c="#00f" p="580,678 605,677" />

      {/* second fall */}
      <Poly w={6} c="#ff69b4" p="747,739 767,752 787,759 813,764 847,767 887,772" />
      <Poly c="#181838" p="673,701 713,718 733,728 757,747 780,760 807,767 884,775" />
      <Poly
        w={7}
        c={CRIMSON}
        p="605,676 647,688 667,695 687,707 707,712 727,718 747,733 767,745 787,752 813,757 847,760 887,765"
      />
      <Poly w={6} c={CRIMSON} p="610,688 647,694 667,701 693,714" />
      <Poly w={3} c={CRIMSON} p="687,713 727,731 747,744 767,764 787,772 800,773" />
      <Poly w={2} c={CRIMSON} p="710,722 740,745 760,760 780,770" />
      <Poly w={2} c="#c81838" p="647,700 667,717 687,733 707,743 727,750 747,773 763,790 777,797" />
      <Poly w={4} c="#00f" p="798,773 828,771" />
      <Poly w={3} c={CRIMSON} p="827,772 847,775 887,778" />

      {/* second rise */}
      {FAN_RIGHT.map((d) => (
        <Poly key={d} c="#2e98ec" p={`960,728 983,${714 + d / 2} 1010,${700 + d} 1053,${692 + d} 1078,${694 + d}`} />
      ))}
      <Poly w={2} c="#0000d0" p="963,718 1010,707 1050,704 1087,701" />
      <Poly c="#142438" p="967,712 983,698 1000,686 1023,677 1052,674" />
      <Poly w={5} c="#1e90ff" p="965,719 983,703 1000,690 1023,681 1052,678" />
      <Poly w={4} c="#00f" p="887,778 900,767 923,752 953,715 980,697 1000,677 1027,665 1052,664" />
      <Poly
        w={7}
        c="#00f"
        p="887,765 907,757 927,750 947,733 963,722 983,710 1000,698 1020,692 1040,687 1073,686"
      />
      <Poly w={3} c={CRIMSON} p="1053,652 1070,653 1087,660 1100,668 1110,678" />
      <Poly w={4} c={CRIMSON} p="1053,665 1070,668 1087,678 1108,695" />
      <Poly w={6} c={CRIMSON} p="1073,686 1093,690 1110,695" />
      <Poly w={2} c={CRIMSON} p="1022,640 1047,652 1073,667 1093,687 1108,703" />

      <g fontFamily="DejaVu Sans, sans-serif">
        <path d="M220 802a8 8 0 0116 0z" fill="#0ff" />
        <path d="M556 696a8 8 0 0016 0z" fill="#0ff" />
        <path d="M228 790v11" stroke="#ff8cff" strokeWidth="3" />
        <path d="M264 743a5 5 0 019 0z" fill="#e8e020" />
        <Ball x={508} y={633} r={12} fill="#fff" />
        <Ball x={507} y={622} fill="#fff" label="3" />
        <path d="M508 634h7v15h-7z" fill="#5fa6cc" />
        <path d="M511 634h4M514 631l3 3-3 3" stroke="#f060a0" strokeWidth="2" fill="none" />
        <Ball x={308} y={823} fill="#fff" label="3" />
        <Ball x={612} y={664} fill="#ff0" />
        <path d="M612 667v13" stroke="#222" strokeWidth="3" />
        <path d="M804 751a8 8 0 1116 0z" fill="#ff0" />
        <Ball x={852} y={798} fill="#0ff" />
        <path d="M852 790v10" stroke="#ff8cff" strokeWidth="3" />
        <Ball x={748} y={820} r={14} fill="#ff4500" />
        <Ball x={748} y={822} fill="#f01010" label="2" color="#fff" />
        <Ball x={996} y={618} r={15} fill="#ff4500" />
        <Ball x={996} y={608} fill="#f01010" label="2" color="#fff" />
        <path d="M965 645L996 622" stroke="#fff" strokeWidth="4" />
        <path d="M996 620v16" stroke="#5fa6cc" strokeWidth="3" />
        <Ball x={1108} y={745} fill="#0ff" />
        <path d="M1108 738v8" stroke="#ff8cff" strokeWidth="3" />
        <Ball x={1108} y={756} r={6} fill="#10a8e0" label="2" color="#103048" />
      </g>
      <path d="M1117 604h10l-5 5z" fill="#fff" />

      <g fontFamily="DejaVu Sans Mono, monospace" fontSize="15" fontWeight="700" fill="#fff">
        <text x="939" y="609">38.25% ADR</text>
        <text x="939" y="802">61.85% ADR</text>
      </g>
      <g fontFamily="DejaVu Sans Mono, monospace" fontSize="17" fontStyle="italic">
        <text x="1182" y="641" fill="#fff">[4/8]</text>
        <text x="1182" y="717" fill="#20e820">[3/8]</text>
        <text x="1182" y="793" fill="#e070b0">[2/8]</text>
      </g>
      <g fontFamily="Liberation Sans, Arial, sans-serif">
        <text x="1127" y="784" fontSize="18" fontWeight="700" fill="#d8a8b2">-32%</text>
        <rect x="4" y="808" width="153" height="21" fill="#b5713a" stroke="#000" />
        <rect x="112" y="803" width="260" height="20" fill="#1e90ff" />
        <g fontSize="19" fontStyle="italic" fill="#fff">
          <text x="22" y="820">XARD777</text>
          <text x="116" y="820">BLUEPRINT FOR SUCCESS</text>
          <text x="381" y="820">COMPOUND INTEREST</text>
          <text x="608" y="820">
            'He who understands it, earns it... He who does not, pays it'
          </text>
        </g>
        <text x="8" y="827" fontSize="21" fontWeight="700" fill="#c0c0c0">DOWN TREND</text>
        <text x="1743" y="827" fontSize="15" fill="#e0e0e0">BBW</text>
        <text x="1861" y="827" fontSize="15" fill="#e0e0e0">s</text>
        <text x="1760" y="820" fontSize="15" fontWeight="700" fill="#a0a0a0">x</text>
      </g>
      <g fontFamily={CHART_FONT} fontSize="10" fill="#fff">
        <text x="8" y="615">GBPJPY,M1</text>
        <text x="11" y="628">
          Balance = 356.1800000000001, Equity = 359.5000000000001, Margin =
          27.81276, Free Margin = 331.68724, Total Orders = 6, Lots = 0.01,0.03,
          Leverage = 500, Total=6
        </text>
        <text x="1125" y="811" fontSize="13">嶒傓:</text>
        <text x="142" y="826">1账</text>
        <text x="620" y="826">1账</text>
        <text x="1099" y="826">2账</text>
      </g>
    </Canvas>
  );
}

function Axis({ x = 1872, y, labels, children }) {
  return (
    <AxisColumn>
      <Canvas x={x} y={y}>
        {labels.map(([text, at, dx = 4]) => (
          <React.Fragment key={text + at}>
            <path d={`M1872 ${at}h2`} stroke="#fff" />
            <text x={1872 + dx} y={at + 4} fontSize="10" fontFamily={CHART_FONT} fill="#fff">
              {text}
            </text>
          </React.Fragment>
        ))}
        {children}
      </Canvas>
    </AxisColumn>
  );
}

const IndicatorTitle = ({ y, children }) => (
  <text x="8" y={y} fontSize="10" fontFamily={CHART_FONT} fill="#fff">
    {children}
  </text>
);

const DayMarks = ({ top, bottom }) => (
  <path
    d={`M388 ${top}V${bottom}M868 ${top}V${bottom}`}
    stroke="#606a72"
    strokeDasharray="4 4"
    shapeRendering="crispEdges"
  />
);

const DASHED = "4 3";

const TIMES = [
  "2022", "17:20", "17:28", "17:36", "17:44", "17:52", "18:00", "18:08", "18:16",
  "18:24", "18:32", "18:40", "18:48", "18:56", "19:04", "19:12", "19:20", "19:28",
];

function PriceChart() {
  return (
    <ChartWindow>
      <PlotRow $height={228} $gap={1}>
        <Plot $line="#fff">
          <PriceDrawing />
          <ChartButton $left={111} $top={0} $width={90} $color="#20e020">guppy ON</ChartButton>
          <ChartButton $left={850} $top={0} $width={60} $color="#20e020">alma ON</ChartButton>
          <ChartButton $left={20} $top={100} $width={80} $color="#d82020">S&amp;R</ChartButton>
          <ChartButton
            $left={8}
            $top={127}
            $width={38}
            $height={24}
            $fill="#222"
            $edge="#707070"
            $color="#909090"
          >
            OFF
          </ChartButton>
          <QuoteCard>
            <QuoteLine $height={28} $size={20} $weight={900} $font="Roboto, sans-serif">
              GBPJPY
            </QuoteLine>
            <QuoteLine $height={18} $size={20} $color="#0ff">161.20</QuoteLine>
            <QuoteLine $font='"DejaVu Sans Mono", monospace' $pad={9}>SPD:5.8</QuoteLine>
            <QuoteLine $color="#20f020" $pad={5}>0:22</QuoteLine>
            <QuoteLine $height={14} $size={12} $color="#e884e8">Daily Open</QuoteLine>
            <QuoteLine $height={19} $color="#e884e8" $pad={13}>161.78</QuoteLine>
            <QuotePair $color="#e884e8">P2Op <b>-55</b></QuotePair>
            <QuotePair $label="#b0b0b0" $color="#c0c0c0">HiLo <b>67</b></QuotePair>
            <QuotePair $color="#40b840">ADR <b>105</b></QuotePair>
            <QuoteShare>18%</QuoteShare>
          </QuoteCard>
        </Plot>
        <Axis
          y={603}
          labels={[
            ["161.345", 616], ["161.300", 651], ["161.255", 686], ["161.210", 721],
            ["161.165", 756], ["161.120", 791], ["161.075", 826],
          ]}
        >
          <rect x="1873" y="722" width="42" height="11" fill="#fff" />
          <text x="1876" y="731" fontSize="10" fontFamily={CHART_FONT}>161.202</text>
        </Axis>
      </PlotRow>

      <PlotRow $height={52} $gap={1}>
        <Plot $line="#fff">
          <Canvas x={4} y={833}>
            <path
              d="M4 839H4000M4 853H4000M4 858H4000M4 863H4000M4 876H4000"
              stroke="#c828c8"
              strokeDasharray={DASHED}
              shapeRendering="crispEdges"
            />
            <DayMarks top={833} bottom={884} />
            <Poly c="#3c80cc" p="4,858 100,859 180,865 250,869 340,869 380,862 430,849 475,844 530,841 600,846 650,848 720,858 790,870 840,872 880,863 930,852 980,841 1040,839 1070,843 1108,844" />
            <Poly c="#3c80cc" p="4,868 120,867 200,872 240,875 320,874 400,868 480,855 540,849 600,853 650,860 700,868 760,874 860,876 920,872 980,860 1030,853 1060,852 1108,868" />
            <Poly c="#f0f070" p="4,862 60,863 150,866 210,870 260,873 320,871 380,865 430,857 480,849 525,846 570,850 640,856 720,865 800,875 860,870 920,864 980,852 1030,845 1070,849 1108,855" />
            <Poly w={2} c="#20e820" p="4,857 20,859 37,864 60,866 90,869 135,870 190,872 205,873 220,876 250,877 260,874 285,866 300,864 355,863 370,860 390,852 405,847 430,845 465,842 490,840 512,839 530,843 550,850 580,860 600,862 640,866 660,868 690,874 730,876 755,880 780,880 800,877 820,870 840,865 870,862 895,859 910,855 935,849 955,842 970,838 990,835 1015,837 1030,844 1055,849 1080,858 1100,867 1108,869" />
            <Poly w={2} c="#f01818" p="4,854 35,856 60,861 80,863 110,866 150,868 190,871 215,874 250,876 275,876 300,868 320,864 370,863 385,859 400,852 420,846 450,844 500,841 530,840 555,846 580,856 600,860 640,863 655,864 670,867 690,872 735,875 770,879 810,879 830,873 850,865 880,861 910,859 935,852 955,844 980,838 1020,836 1040,839 1065,846 1085,856 1108,866" />
            <IndicatorTitle y={845}>
              tdi1 M1 TDI of Slow rsi of JMA (10,0,0) 64.4391 53.7722 43.1054 39.3770 42.5060
            </IndicatorTitle>
          </Canvas>
        </Plot>
        <Axis
          y={832}
          labels={[["68", 839, 2], ["69.6813", 839, 3], ["55", 853, 2], ["50", 858, 2], ["45", 863, 2], ["32", 876, 2], ["25.7278", 876, 3]]}
        />
      </PlotRow>

      <PlotRow $height={48} $gap={1}>
        <Plot $line="#fff">
          <Canvas x={4} y={886}>
            <path d="M4 904H4000M4 909H4000M4 914H4000" stroke="#c828c8" shapeRendering="crispEdges" />
            <DayMarks top={886} bottom={932} />
            <Poly c="#90ccec" p="4,894 20,897 90,896 110,900 130,910 170,914 260,912 290,901 350,901 390,892 440,892 480,890 510,893 550,889 590,891 640,898 680,910 750,910 775,920 800,912 830,901 900,900 950,891 1010,889 1085,889 1108,894" />
            <Poly c="#90ccec" p="4,924 60,926 90,929 120,929 140,924 260,925 275,927 340,927 380,922 410,918 470,917 500,905 520,905 540,914 570,924 620,928 640,929 700,927 750,927 775,923 830,928 890,926 950,918 1020,912 1045,911 1070,918 1108,928" />
            <Poly c="#f0f070" p="4,910 70,911 110,915 150,920 200,919 260,918 320,912 370,908 420,903 480,900 510,899 560,904 640,914 680,918 780,920 850,914 900,912 960,904 1010,901 1060,903 1108,911" />
            <Poly w={2} c="#20e820" p="4,922 14,922 22,912 35,914 45,922 60,922 80,920 110,921 135,921 148,911 165,921 180,913 190,915 200,922 240,921 260,915 275,898 295,903 315,919 335,919 350,908 365,897 400,896 420,900 430,908 440,908 450,899 465,896 490,900 515,898 530,915 545,922 570,922 590,919 600,906 612,906 625,916 640,922 662,922 670,919 700,919 735,922 770,921 790,910 805,908 820,898 835,903 850,916 868,918 880,914 885,917 895,908 905,897 940,896 965,895 980,901 1005,899 1028,907 1037,917 1055,915 1070,921 1108,922" />
            <Poly w={2} c="#f01818" p="4,908 25,914 50,919 80,919 120,920 150,918 180,916 200,918 250,921 265,919 285,908 305,905 330,911 360,912 380,902 400,896 430,902 460,901 490,899 515,898 540,908 560,917 590,921 610,916 640,914 665,920 780,920 800,916 820,906 850,905 870,911 900,913 930,901 950,896 970,895 1000,898 1020,900 1050,908 1075,917 1108,922" />
            <IndicatorTitle y={898}>TDI Alerts v 107.314 44.395 -18.525 0.000 2.497</IndicatorTitle>
          </Canvas>
        </Plot>
        <Axis y={885} labels={[["132.476", 892], ["0.00", 922, 3], ["-94.226", 926]]}>
          <rect x="1873" y="899" width="13" height="20" fill="#e818e8" />
          <text x="1874" y="913" fontSize="10" fontFamily={CHART_FONT}>50</text>
        </Axis>
      </PlotRow>

      <PlotRow $height={45} $gap={1}>
        <Plot $line="#fff">
          <Canvas x={4} y={935}>
            <Bands data={FILTER_BANDS} top={935} height={43} />
            <DayMarks top={935} bottom={978} />
            <path d="M4 957H4000" stroke="#d828d8" strokeDasharray={DASHED} shapeRendering="crispEdges" />
            <path d="M6 957H1108" stroke="#fff" strokeDasharray="2 5" shapeRendering="crispEdges" />
            <Poly dash="3 3" c="#a8b840" p="4,951 50,952 120,950 170,948 250,945 300,945 350,950 430,952 460,948 520,942 580,945 640,952 680,953 740,948 800,943 850,946 920,952 970,943 1020,939 1070,940 1108,947" />
            <Poly dash="3 3" c="#e080a0" p="20,963 160,966 200,969 280,970 340,966 400,964 440,964 480,969 530,973 570,972 640,962 680,963 750,969 800,973 860,968 900,964 930,963 970,970 1030,976 1060,975 1108,967" />
            <Poly w={2} c="#107810" p="4,964 20,963 50,965 120,966 145,967 190,967 200,971 225,972 250,971 265,967 290,966 340,967 360,960 400,950 435,948 460,944 480,941 510,940 535,943 560,948 600,952 640,959 650,961 680,965 720,967 750,974 770,973 800,970 820,966 880,964 905,955 935,947 955,940 995,938 1015,939 1060,947 1108,959" />
            <Poly w={2} c="#f01010" p="20,963 50,965 68,966" />
            <Poly w={2} c="#f01010" p="76,966 92,966" />
            <Poly w={2} c="#f01010" p="110,966 124,966" />
            <Poly w={2} c="#f01010" p="140,967 156,967" />
            <Poly w={2} c="#f01010" p="172,967 190,967 200,971 228,972" />
            <Poly w={2} c="#f01010" p="300,966 324,967" />
            <Poly w={2} c="#f01010" p="405,950 420,949" />
            <Poly w={2} c="#f01010" p="490,941 510,940 535,943 560,948 600,952 640,959 650,961 680,965 700,966" />
            <Poly w={2} c="#f01010" p="708,967 720,967 750,974 765,973" />
            <Poly w={2} c="#f01010" p="868,964 876,964" />
            <Poly w={2} c="#f01010" p="995,938 1015,939 1060,947 1108,959" />
            <IndicatorTitle y={947}>
              Spb f1 GBPJPY M1 - Super passband filter (40.00,60.00,10) 0.0113 0.0000 -0.0113 -0.0019 -0.0019
            </IndicatorTitle>
          </Canvas>
        </Plot>
        <Axis y={934} labels={[["0.0261", 941], ["0.00", 957, 3], ["-0.0244", 971]]} />
      </PlotRow>

      <PlotRow $height={5}>
        <Plot $line="#fff" />
        <AxisColumn />
      </PlotRow>
      <PlotRow $height={20}>
        <Canvas x={3} y={985}>
          {TIMES.map((t, i) => (
            <React.Fragment key={t}>
              <path d={`M${4 + i * 64} 985v3`} stroke="#fff" />
              <text x={3 + i * 64} y="997" fontSize="10" fontFamily={CHART_FONT} fill="#fff">
                31 Aug {t}
              </text>
            </React.Fragment>
          ))}
        </Canvas>
      </PlotRow>
    </ChartWindow>
  );
}

/* ---------- shell ---------- */

const MENUS = ["文件(F)", "显示(V)", "插入(I)", "图表(C)", "工具(T)", "窗口(W)", "帮助(H)"];
const PERIODS = ["M1", "M5", "M15", "M30", "H1", "H4", "D1", "W1", "MN"];

const CHART_TABS = [
  ["BTCUSD,Daily", 105], ["GBPJPY,Daily", 96], ["BTCUSD_6S,M1 (offline)", 160],
  ["BTCUSD_2S,M1 (offline)", 160], ["BTCUSD_3S,M1 (offline)", 160],
  ["BTCUSD,Daily", 100], ["BTCJPY,Daily", 96], ["LTCUSD,Daily", 101],
  ["ETHUSD,Daily", 99], ["BCHUSD,Daily", 104], ["XRPUSD,Daily", 100],
  ["BTCXAU,Daily", 100], ["GBPJPY,M1 (visual)", 132], ["GBPJPY,M1 (visual)", 133],
];

function Toolbars() {
  return (
    <>
      <ToolRow>
        <ToolGroup $underline>
          <Grip />
          <ToolButton $width={22} aria-label="newChart"><Icon name="newChart" /></ToolButton>
          <Caret aria-label="chart list" />
          <ToolButton aria-label="profiles"><Icon name="profiles" /></ToolButton>
          <Caret aria-label="profile list" />
          <Separator />
          <Tool name="marketWatch" />
          <Tool name="cross" />
          <Tool name="folderStar" />
          <Tool name="terminal" />
          <Tool name="tester" pressed />
          <Separator />
          <ToolButton $width={68}><Icon name="order" />新订单</ToolButton>
          <Tool name="gold" />
          <Tool name="cloud" />
          <Tool name="signal" />
          <ToolButton $width={78} $pressed><Icon name="auto" />自动交易</ToolButton>
        </ToolGroup>
        <ToolGroup $underline>
          <Grip />
          <Tool name="bars" />
          <Tool name="candles" />
          <Tool name="line" pressed />
          <Separator />
          <Tool name="zoomIn" />
          <Tool name="zoomOut" />
          <Tool name="tile" />
          <Separator />
          <Tool name="autoScroll" pressed />
          <Tool name="shift" pressed />
          <Separator />
          <ToolButton $width={24} aria-label="indicators"><Icon name="indicator" /></ToolButton>
          <Caret aria-label="indicator list" />
          <ToolButton $width={24} aria-label="periods"><Icon name="clock" /></ToolButton>
          <Caret aria-label="period list" />
          <ToolButton $width={24} aria-label="templates"><Icon name="template" /></ToolButton>
          <Caret aria-label="template list" />
        </ToolGroup>
        <ToolSpacer />
        <ToolButton aria-label="search"><Icon name="search" /></ToolButton>
        <MailButton aria-label="messages">
          <Icon name="bubble" />
          <Badge>4</Badge>
        </MailButton>
      </ToolRow>
      <ToolRow $last>
        <ToolGroup>
          <Grip />
          <Tool name="arrow" pressed />
          <Tool name="crosshair" />
          <Separator />
          <Tool name="vline" />
          <Tool name="hline" />
          <Tool name="trend" />
          <Tool name="channel" />
          <Tool name="fibo" />
          <Tool name="text" />
          <Tool name="label" />
          <ToolButton $width={24} aria-label="arrows"><Icon name="arrows" /></ToolButton>
          <Caret aria-label="arrow list" />
        </ToolGroup>
        <ToolGroup>
          <Grip />
          {PERIODS.map((p) => (
            <PeriodButton key={p} $pressed={p === "M1"}>{p}</PeriodButton>
          ))}
        </ToolGroup>
      </ToolRow>
    </>
  );
}

export default function App() {
  return (
    <Window>
      <GlobalStyle />
      <TitleBar>
        <Icon name="app" />
        <h1>6999274: Exness-Trial - 模拟帐户 - Exness Technologies Ltd - [GBPJPY,M1 (visual)]</h1>
        <WindowButton aria-label="minimize">
          <svg width="12" height="12"><path d="M1 5.500h10" stroke="#888" /></svg>
        </WindowButton>
        <WindowButton aria-label="restore">
          <svg width="12" height="12" fill="none" stroke="#888">
            <path d="M1.500 3.500h7v7h-7zM3.500 3.500v-2h7v7h-2" />
          </svg>
        </WindowButton>
        <WindowButton aria-label="close">
          <svg width="12" height="12"><path d="M1 1l10 10M11 1L1 11" stroke="#888" /></svg>
        </WindowButton>
      </TitleBar>
      <MenuBar>
        <Icon name="chartDoc" />
        <MenuItems>
          {MENUS.map((m) => (
            <button key={m}>{m}</button>
          ))}
        </MenuItems>
        <MdiButton aria-label="minimize chart">
          <svg width="9" height="9"><path d="M1 7h7" stroke="#98a2ae" strokeWidth="2" /></svg>
        </MdiButton>
        <MdiButton aria-label="restore chart">
          <svg width="9" height="9" fill="none" stroke="#98a2ae"><path d="M1 4h5v4H1zM3 3V1h5v4H6M1 5h5" /></svg>
        </MdiButton>
        <MdiButton aria-label="close chart">
          <svg width="9" height="9"><path d="M2 2l6 6M8 2L2 8" stroke="#98a2ae" strokeWidth="2" /></svg>
        </MdiButton>
      </MenuBar>
      <Toolbars />
      <TesterPanel />
      <PriceChart />
      <ChartTabs>
        {CHART_TABS.map(([name, width], i) => (
          <ChartTab key={i} $width={width} $active={i === CHART_TABS.length - 1}>
            {name}
          </ChartTab>
        ))}
        <TabScroll>
          <button aria-label="previous tabs">◀</button>
          <button aria-label="next tabs">▶</button>
        </TabScroll>
      </ChartTabs>
      <StatusBar>
        <StatusCell>寻求帮助,请按F1键</StatusCell>
        <StatusCell $width={135}>Default</StatusCell>
        <StatusCell $width={118} />
        <StatusCell $width={82} />
        <StatusCell $width={81} />
        <StatusCell $width={78} />
        <StatusCell $width={80} />
        <StatusCell $width={78} />
        <StatusCell $width={144}>
          <svg width="24" height="14">
            <path d="M0 5h24" stroke="#5c7c20" strokeWidth="9" strokeDasharray="2 1" />
            <path d="M0 11L24 3V14H0z" fill="#f0f0f0" />
            <path d="M1 14v-2M4 14v-3M7 14v-4M10 14V9M13 14V8M16 14V7M19 14V6M22 14V5" stroke="#0c4870" strokeWidth="2" />
          </svg>
          2852/133 kb
        </StatusCell>
      </StatusBar>
      <Taskbar>
        <svg width="100%" height="9">
          <path d="M12 8l6-1v2h-6zM19 7l6-1v3h-6zM269 7h16v2h-16z" fill="#fff" />
          <circle cx="55" cy="12" r="4" fill="none" stroke="#fff" />
          <path d="M83 7h8v2h-8z" fill="#e0a818" />
          <path d="M162 7h7v2h-7z" fill="#10c8e0" />
          <path d="M238 7h4v2h-4z" fill="#e04838" />
          <path d="M307 7h14v2h-14zM1672 7h16v2h-16z" fill="#10b010" />
          <circle cx="1655" cy="11" r="3" fill="none" stroke="#fff" />
          <path d="M1799 9l10-2v2zM1757 8h1v1h-1z" fill="#e85010" />
          <path d="M1879 7h16v2h-16z" fill="#fff" />
        </svg>
      </Taskbar>
    </Window>
  );
}
